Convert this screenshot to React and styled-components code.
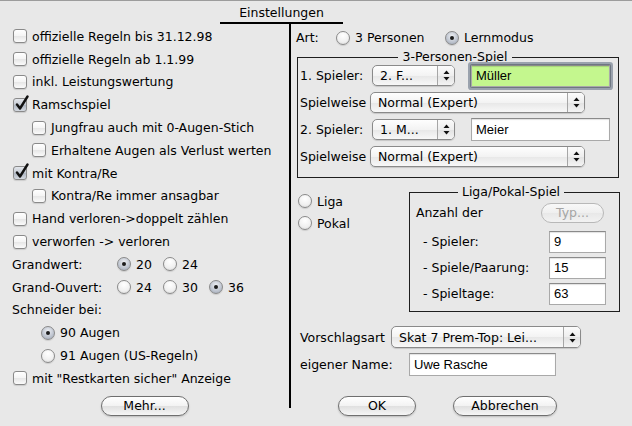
import React from "react";
import styled, { createGlobalStyle } from "styled-components";

const GlobalStyle = createGlobalStyle`
  html, body {
    margin: 0;
    padding: 0;
    background: #e8e8e8;
  }
  body {
    font-family: "DejaVu Sans", "Liberation Sans", sans-serif;
    font-size: 12.5px;
    color: #000;
  }
`;

const Dialog = styled.div`
  width: 632px;
  height: 426px;
  box-sizing: border-box;
  border-top: 1px solid #9c9c9c;
  background: #e8e8e8;
  overflow: hidden;
`;

const Header = styled.div`
  display: flex;
  height: 23px;
`;

const Title = styled.div`
  margin-left: 220px;
  width: 123px;
  box-sizing: border-box;
  border-bottom: 2px solid #000;
  text-align: center;
  padding-top: 3px;
  line-height: 18px;
`;

const Body = styled.div`
  display: flex;
  align-items: flex-start;
`;

const LeftCol = styled.div`
  width: 289px;
  box-sizing: border-box;
  padding-left: 13px;
  padding-top: 1px;
  display: flex;
  flex-direction: column;
`;

const Divider = styled.div`
  width: 2px;
  height: 384px;
  background: #000;
  flex: none;
`;

const RightCol = styled.div`
  flex: 1;
  padding-left: 5px;
  display: flex;
  flex-direction: column;
`;

const Row = styled.div`
  display: flex;
  align-items: center;
  height: ${(p) => p.$h || 22.8}px;
  padding-left: ${(p) => p.$indent || 0}px;
  white-space: nowrap;
`;

const Caption = styled.span`
  width: ${(p) => (p.$w ? `${p.$w}px` : "auto")};
  flex: none;
  margin-left: ${(p) => p.$ml || 0}px;
`;

const Option = styled.label`
  display: flex;
  align-items: center;
  gap: 5px;
  min-width: ${(p) => p.$w || 0}px;
  margin-left: ${(p) => p.$ml || 0}px;
`;

const Box = styled.span`
  position: relative;
  width: 14px;
  height: 14px;
  box-sizing: border-box;
  flex: none;
  border: 1px solid #8a8a8a;
  border-radius: 3px;
  background: ${(p) =>
    p.$on
      ? "linear-gradient(#e4e7ec, #c2c8d1 50%, #aeb6c2 51%, #d4d9e0)"
      : "linear-gradient(#ffffff, #f4f4f4 50%, #e6e6e6 51%, #fbfbfb)"};
  box-shadow: 0 1px 1px rgba(0, 0, 0, 0.12);

  svg {
    position: absolute;
    left: 1px;
    top: -4px;
  }
`;

const Circle = styled.span`
  position: relative;
  width: 14px;
  height: 14px;
  box-sizing: border-box;
  flex: none;
  border: 1px solid #8a8a8a;
  border-radius: 50%;
  background: ${(p) =>
    p.$on
      ? "radial-gradient(circle at 50% 35%, #eef0f4, #b5bcc8 70%, #949eac)"
      : "radial-gradient(circle at 50% 30%, #ffffff, #f0f0f0 60%, #d6d6d6)"};
  box-shadow: 0 1px 1px rgba(0, 0, 0, 0.12);

  &::after {
    content: "";
    display: ${(p) => (p.$on ? "block" : "none")};
    position: absolute;
    left: 4px;
    top: 4px;
    width: 4px;
    height: 4px;
    border-radius: 50%;
    background: #1c1c1c;
  }
`;

const CheckBox = ({ on }) => (
  <Box $on={on}>
    {on && (
      <svg width="14" height="16" viewBox="0 0 14 16">
        <path d="M2 9.5 L5 13.5 L12.5 1.5" fill="none" stroke="#111" strokeWidth="2.4" strokeLinecap="round" strokeLinejoin="round" />
      </svg>
    )}
  </Box>
);

const Check = ({ on, children, indent }) => (
  <Row $indent={indent}>
    <Option>
      <CheckBox on={on} />
      <span>{children}</span>
    </Option>
  </Row>
);

const Radio = ({ on, children, w, ml }) => (
  <Option $w={w} $ml={ml}>
    <Circle $on={on} />
    <span>{children}</span>
  </Option>
);

const PushButton = styled.button`
  width: ${(p) => p.$w}px;
  height: 20px;
  box-sizing: border-box;
  border: 1px solid ${(p) => (p.disabled ? "#b8b8b8" : "#6f6f6f")};
  border-radius: 10px;
  background: ${(p) =>
    p.disabled
      ? "linear-gradient(#f8f8f8, #efefef 50%, #e8e8e8 51%, #f2f2f2)"
      : "linear-gradient(#ffffff, #f2f2f2 50%, #e0e0e0 51%, #f6f6f6)"};
  box-shadow: ${(p) => (p.disabled ? "none" : "0 1px 2px rgba(0,0,0,0.2)")};
  font-family: "DejaVu Sans", "Liberation Sans", sans-serif;
  font-size: 12.5px;
  color: ${(p) => (p.disabled ? "#a4a4a4" : "#000")};
  padding: 0;
  line-height: 18px;
`;

const PopupBox = styled.div`
  width: ${(p) => p.$w}px;
  height: ${(p) => p.$h || 21}px;
  box-sizing: border-box;
  flex: none;
  display: flex;
  align-items: stretch;
  border: 1px solid #8a8a8a;
  border-radius: 5px;
  background: linear-gradient(#fefefe, #f3f3f3 50%, #e7e7e7 51%, #f8f8f8);
  box-shadow: 0 1px 1px rgba(0, 0, 0, 0.15);
  overflow: hidden;
`;

const PopupText = styled.span`
  flex: 1;
  padding-left: 7px;
  display: flex;
  align-items: center;
  white-space: nowrap;
  overflow: hidden;
`;

const PopupArrows = styled.span`
  width: 16px;
  flex: none;
  border-left: 1px solid #a6a6a6;
  display: flex;
  align-items: center;
  justify-content: center;
  background: linear-gradient(#fbfbfb, #eeeeee 50%, #e2e2e2 51%, #f4f4f4);
`;

const Popup = ({ w, h, children }) => (
  <PopupBox $w={w} $h={h}>
    <PopupText>{children}</PopupText>
    <PopupArrows>
      <svg width="7" height="11" viewBox="0 0 7 11">
        <path d="M3.5 0.5 L6.5 4 L0.5 4 Z" fill="#111" />
        <path d="M3.5 10.5 L6.5 7 L0.5 7 Z" fill="#111" />
      </svg>
    </PopupArrows>
  </PopupBox>
);

const Field = styled.div`
  width: ${(p) => p.$w}px;
  height: ${(p) => p.$h || 22}px;
  box-sizing: border-box;
  flex: none;
  margin-left: ${(p) => p.$ml || 0}px;
  border: 1px solid #a9a9a9;
  border-top-color: #8a8a8a;
  background: ${(p) => p.$bg || "#fff"};
  box-shadow: ${(p) =>
    p.$focus
      ? "0 0 0 1px #6f7782, 0 0 0 3px #9aa2ad, inset 0 1px 1px rgba(0,0,0,0.15)"
      : "inset 0 1px 1px rgba(0,0,0,0.12)"};
  border-radius: ${(p) => (p.$focus ? "1px" : "0")};
  padding-left: 4px;
  display: flex;
  align-items: center;
  font-family: "Liberation Sans", Arial, sans-serif;
  font-size: 13px;
  color: #000;
`;

const ArtRow = styled.div`
  display: flex;
  align-items: center;
  height: 27px;
  white-space: nowrap;
`;

const Group = styled.fieldset`
  width: ${(p) => p.$w}px;
  box-sizing: border-box;
  flex: none;
  margin: 0 0 0 ${(p) => p.$ml || 0}px;
  padding: 0 ${(p) => p.$pr || 8}px ${(p) => p.$pb || 8}px ${(p) => p.$pl || 2}px;
  border: 1px solid #1e1e1e;
  min-width: 0;
  display: flex;
  flex-direction: column;
  gap: ${(p) => p.$gap || 0}px;

  legend {
    margin: 0 auto;
    padding: 0 4px;
    line-height: 12px;
    white-space: nowrap;
  }
`;

const GroupRow = styled.div`
  display: flex;
  align-items: center;
  justify-content: ${(p) => (p.$spread ? "space-between" : "flex-start")};
  height: ${(p) => p.$h || 25}px;
  margin-top: ${(p) => p.$mt || 0}px;
  padding-left: ${(p) => p.$indent || 0}px;
  white-space: nowrap;
`;

const LigaSection = styled.div`
  display: flex;
  margin-top: 8px;
  margin-left: 1px;
`;

const RadioCol = styled.div`
  width: 111px;
  padding-top: 4px;
  padding-left: 1px;
  display: flex;
  flex-direction: column;
`;

const FormRow = styled.div`
  display: flex;
  align-items: center;
  height: 24px;
  padding-left: 4px;
  margin-top: ${(p) => p.$mt || 0}px;
  white-space: nowrap;
`;

const ButtonBar = styled.div`
  display: flex;
  gap: 37px;
  padding-left: 42px;
  margin-top: 20px;
`;

const MehrWrap = styled.div`
  display: flex;
  justify-content: center;
  margin-left: -13px;
  margin-top: 6px;
`;

export default function App() {
  return (
    <>
      <GlobalStyle />
      <Dialog>
        <Header>
          <Title>Einstellungen</Title>
        </Header>
        <Body>
          <LeftCol>
            <Check>offizielle Regeln bis 31.12.98</Check>
            <Check>offizielle Regeln ab 1.1.99</Check>
            <Check>inkl. Leistungswertung</Check>
            <Check on>Ramschspiel</Check>
            <Check indent={19}>Jungfrau auch mit 0-Augen-Stich</Check>
            <Check indent={19}>Erhaltene Augen als Verlust werten</Check>
            <Check on>mit Kontra/Re</Check>
            <Check indent={19}>Kontra/Re immer ansagbar</Check>
            <Check>Hand verloren-&gt;doppelt zählen</Check>
            <Check>verworfen -&gt; verloren</Check>
            <Row>
              <Caption $w={105} $ml={-1}>Grandwert:</Caption>
              <Radio on w={46}>20</Radio>
              <Radio w={46}>24</Radio>
            </Row>
            <Row>
              <Caption $w={105} $ml={-1}>Grand-Ouvert:</Caption>
              <Radio w={46}>24</Radio>
              <Radio w={46}>30</Radio>
              <Radio on w={46}>36</Radio>
            </Row>
            <Row>
              <Caption $ml={-1}>Schneider bei:</Caption>
            </Row>
            <Row $indent={28}>
              <Radio on>90 Augen</Radio>
            </Row>
            <Row $indent={28}>
              <Radio>91 Augen (US-Regeln)</Radio>
            </Row>
            <Check>mit "Restkarten sicher" Anzeige</Check>
            <MehrWrap>
              <PushButton $w={88}>Mehr...</PushButton>
            </MehrWrap>
          </LeftCol>
          <Divider />
          <RightCol>
            <ArtRow>
              <Caption $w={40}>Art:</Caption>
              <Radio w={109}>3 Personen</Radio>
              <Radio on>Lernmodus</Radio>
            </ArtRow>
            <Group $w={322} $ml={1} $gap={2}>
              <legend>3-Personen-Spiel</legend>
              <GroupRow>
                <Caption $w={72}>1. Spieler:</Caption>
                <Popup w={83}>2. F...</Popup>
                <Field $w={139} $h={22} $ml={16} $bg="#c4f78e" $focus>
                  Müller
                </Field>
              </GroupRow>
              <GroupRow>
                <Caption $w={70}>Spielweise</Caption>
                <Popup w={215}>Normal (Expert)</Popup>
              </GroupRow>
              <GroupRow>
                <Caption $w={72}>2. Spieler:</Caption>
                <Popup w={83}>1. M...</Popup>
                <Field $w={139} $h={23} $ml={16}>
                  Meier
                </Field>
              </GroupRow>
              <GroupRow>
                <Caption $w={70}>Spielweise</Caption>
                <Popup w={215}>Normal (Expert)</Popup>
              </GroupRow>
            </Group>
            <LigaSection>
              <RadioCol>
                <Row $h={22}>
                  <Radio>Liga</Radio>
                </Row>
                <Row $h={22}>
                  <Radio>Pokal</Radio>
                </Row>
              </RadioCol>
              <Group $w={211} $pl={6} $pr={13} $pb={6} $gap={3}>
                <legend>Liga/Pokal-Spiel</legend>
                <GroupRow $spread $h={21} $mt={4}>
                  <span>Anzahl der</span>
                  <PushButton $w={63} disabled style={{ marginRight: 2 }}>
                    Typ...
                  </PushButton>
                </GroupRow>
                <GroupRow $spread $h={23} $mt={4} $indent={7}>
                  <span>- Spieler:</span>
                  <Field $w={57} $h={22}>9</Field>
                </GroupRow>
                <GroupRow $spread $h={23} $indent={7}>
                  <span>- Spiele/Paarung:</span>
                  <Field $w={57} $h={22}>15</Field>
                </GroupRow>
                <GroupRow $spread $h={23} $indent={7}>
                  <span>- Spieltage:</span>
                  <Field $w={57} $h={22}>63</Field>
                </GroupRow>
              </Group>
            </LigaSection>
            <FormRow $mt={13}>
              <Caption $w={91}>Vorschlagsart</Caption>
              <Popup w={190} h={22}>Skat 7 Prem-Top: Lei...</Popup>
            </FormRow>
            <FormRow $mt={3}>
              <Caption $w={109}>eigener Name:</Caption>
              <Field $w={147} $h={23}>Uwe Rasche</Field>
            </FormRow>
            <ButtonBar>
              <PushButton $w={78}>OK</PushButton>
              <PushButton $w={104}>Abbrechen</PushButton>
            </ButtonBar>
          </RightCol>
        </Body>
      </Dialog>
    </>
  );
}
